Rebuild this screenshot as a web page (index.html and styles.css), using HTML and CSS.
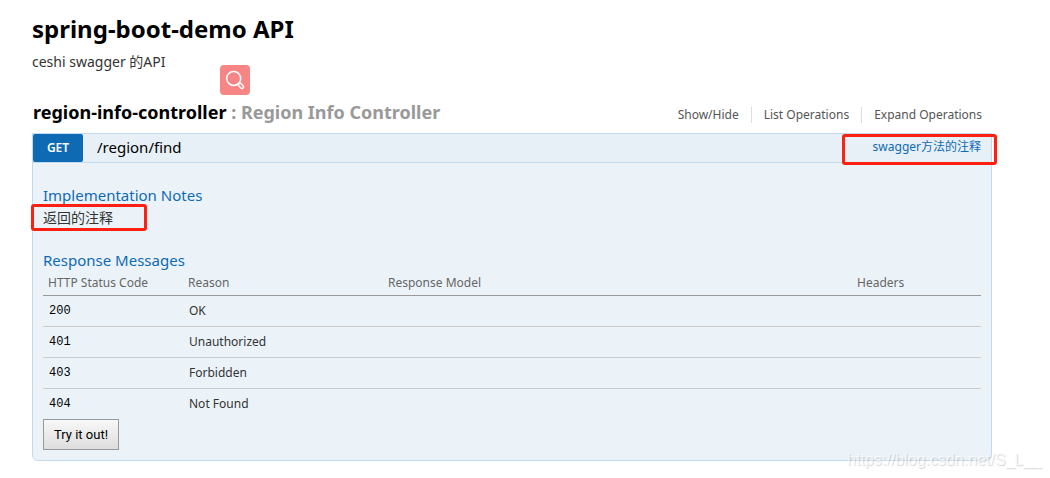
FILE: index.html
```
<!DOCTYPE html>
<html lang="zh-CN">
<head>
    <meta charset="UTF-8">
    <meta name="viewport" content="width=device-width, initial-scale=1.0">
    <title>spring-boot-demo API</title>
    <link rel="stylesheet" href="styles.css">
</head>
<body>
    <div class="swagger-section">
        <div class="info">
            <h1 class="info-title">spring-boot-demo API</h1>
            <p class="info-description">ceshi swagger 的API</p>
            <button class="search-badge" type="button" aria-label="Search">
                <svg width="30" height="30" viewBox="0 0 30 30" fill="none" stroke="#fff" stroke-width="1.5">
                    <circle cx="13.7" cy="13.4" r="7"/>
                    <path d="M18.3 18.2l1.2 1"/>
                    <rect x="18" y="19.2" width="6" height="3.2" rx="1.6" transform="rotate(45 21 20.8)" stroke-width="1.4"/>
                </svg>
            </button>
        </div>

        <div class="resource">
            <div class="heading">
                <h2><a href="#region">region-info-controller</a> : Region Info Controller</h2>
                <ul class="options">
                    <li><a href="#toggle">Show/Hide</a></li>
                    <li><a href="#list">List Operations</a></li>
                    <li><a href="#expand">Expand Operations</a></li>
                </ul>
            </div>

            <div class="operation">
                <div class="operation-heading">
                    <a class="http-method" href="#find">GET</a>
                    <a class="path" href="#find">/region/find</a>
                    <a class="summary marked" href="#find">swagger方法的注释</a>
                </div>
                <div class="content">
                    <h4>Implementation Notes</h4>
                    <p class="notes marked">返回的注释</p>

                    <h4>Response Messages</h4>
                    <table class="responses">
                        <thead>
                            <tr>
                                <th class="col-code">HTTP Status Code</th>
                                <th class="col-reason">Reason</th>
                                <th class="col-model">Response Model</th>
                                <th>Headers</th>
                            </tr>
                        </thead>
                        <tbody>
                            <tr><td class="code">200</td><td>OK</td><td></td><td></td></tr>
                            <tr><td class="code">401</td><td>Unauthorized</td><td></td><td></td></tr>
                            <tr><td class="code">403</td><td>Forbidden</td><td></td><td></td></tr>
                            <tr><td class="code">404</td><td>Not Found</td><td></td><td></td></tr>
                        </tbody>
                    </table>
                    <button class="submit" type="button">Try it out!</button>
                </div>
            </div>
        </div>
    </div>
    <div class="watermark">https://blog.csdn.net/S_L__</div>
</body>
</html>
```

FILE: styles.css
```
* {
    box-sizing: border-box;
}

body {
    position: relative;
    margin: 0;
    background: #fff;
    font-family: "Noto Sans", "Noto Sans CJK SC", sans-serif;
    font-size: 12px;
    color: #333;
}

h1, h2, h4, p, ul {
    margin: 0;
    padding: 0;
}

a {
    color: inherit;
    text-decoration: none;
}

.swagger-section {
    padding: 12px 58px 16px 32px;
}

/* API info */
.info {
    position: relative;
    height: 84px;
}

.info-title {
    font-size: 24px;
    line-height: 34px;
    color: #000;
}

.info-description {
    padding-top: 6px;
    font-size: 14px;
    line-height: 20px;
}

.search-badge {
    position: absolute;
    left: 188px;
    top: 53px;
    width: 30px;
    height: 30px;
    padding: 0;
    border: 0;
    border-radius: 4px;
    background: #f88585;
    cursor: pointer;
}

.search-badge svg {
    display: block;
}

/* Resource heading */
.heading {
    display: flex;
    justify-content: space-between;
    height: 37px;
    padding: 0 10px 0 1px;
}

.heading h2 {
    font-size: 18px;
    line-height: 32px;
    color: #999;
}

.heading h2 a {
    color: #000;
}

.options {
    display: flex;
    align-items: center;
    height: 38px;
    list-style: none;
    color: #555;
}

.options li {
    padding: 0 12px;
    border-right: 1px solid #ddd;
    line-height: 16px;
}

.options li:last-child {
    padding-right: 0;
    border-right: 0;
}

/* Operation */
.operation {
    border: 1px solid #c3d9ec;
    border-radius: 0 0 6px 6px;
    background: #ebf3f9;
}

.operation-heading {
    display: flex;
    height: 29px;
    padding-right: 10px;
    border-bottom: 1px solid #c3d9ec;
    background: #e7f0f7;
}

.http-method {
    width: 50px;
    border-radius: 2px;
    background: #0f6ab4;
    color: #fff;
    font-size: 12px;
    font-weight: 600;
    line-height: 28px;
    text-align: center;
}

.path {
    padding-left: 14px;
    font-size: 15px;
    line-height: 27px;
    color: #000;
}

.summary {
    margin-left: auto;
    font-size: 12px;
    line-height: 26px;
    color: #0f6ab4;
}

/* Red annotation frame around the marked text */
.marked {
    position: relative;
}

.marked::after {
    content: "";
    position: absolute;
    border: 3px solid #ff2012;
    border-radius: 3px;
}

.summary::after {
    inset: 0 -16px -3px -31px;
}

.content {
    padding: 21px 10px 10px;
}

.content h4 {
    font-size: 15px;
    font-weight: 400;
    line-height: 22px;
    color: #0f6ab4;
}

.notes {
    width: fit-content;
    margin-bottom: 20px;
    font-size: 14px;
    line-height: 23px;
}

.notes::after {
    inset: -2px -34px -2px -12px;
}

.responses {
    width: 100%;
    border-collapse: collapse;
    table-layout: fixed;
}

.responses th {
    height: 24px;
    padding: 0 5px;
    border-bottom: 1px solid #999;
    color: #666;
    font-weight: 400;
    line-height: 16px;
    text-align: left;
}

.col-code {
    width: 140px;
}

.col-reason {
    width: 200px;
}

.col-model {
    width: 50%;
}

.responses td {
    height: 31px;
    padding: 0 6px;
    border-bottom: 1px solid #ccc;
    line-height: 16px;
}

.responses tr:last-child td {
    border-bottom: 0;
}

.responses .code {
    font-family: "Liberation Mono", monospace;
    color: #000;
}

.submit {
    display: block;
    height: 31px;
    padding: 0 10px;
    border: 1px solid #999;
    background: linear-gradient(#f8f8f8, #ddd);
    font-family: Roboto, sans-serif;
    font-size: 13px;
    color: #000;
    cursor: pointer;
}

.watermark {
    position: absolute;
    right: 9px;
    bottom: 5px;
    font-family: "Liberation Sans", sans-serif;
    font-size: 16px;
    line-height: 24px;
    color: rgba(255, 255, 255, 0.7);
    text-shadow: 1px 1px 1px rgba(0, 0, 0, 0.16);
}
```
